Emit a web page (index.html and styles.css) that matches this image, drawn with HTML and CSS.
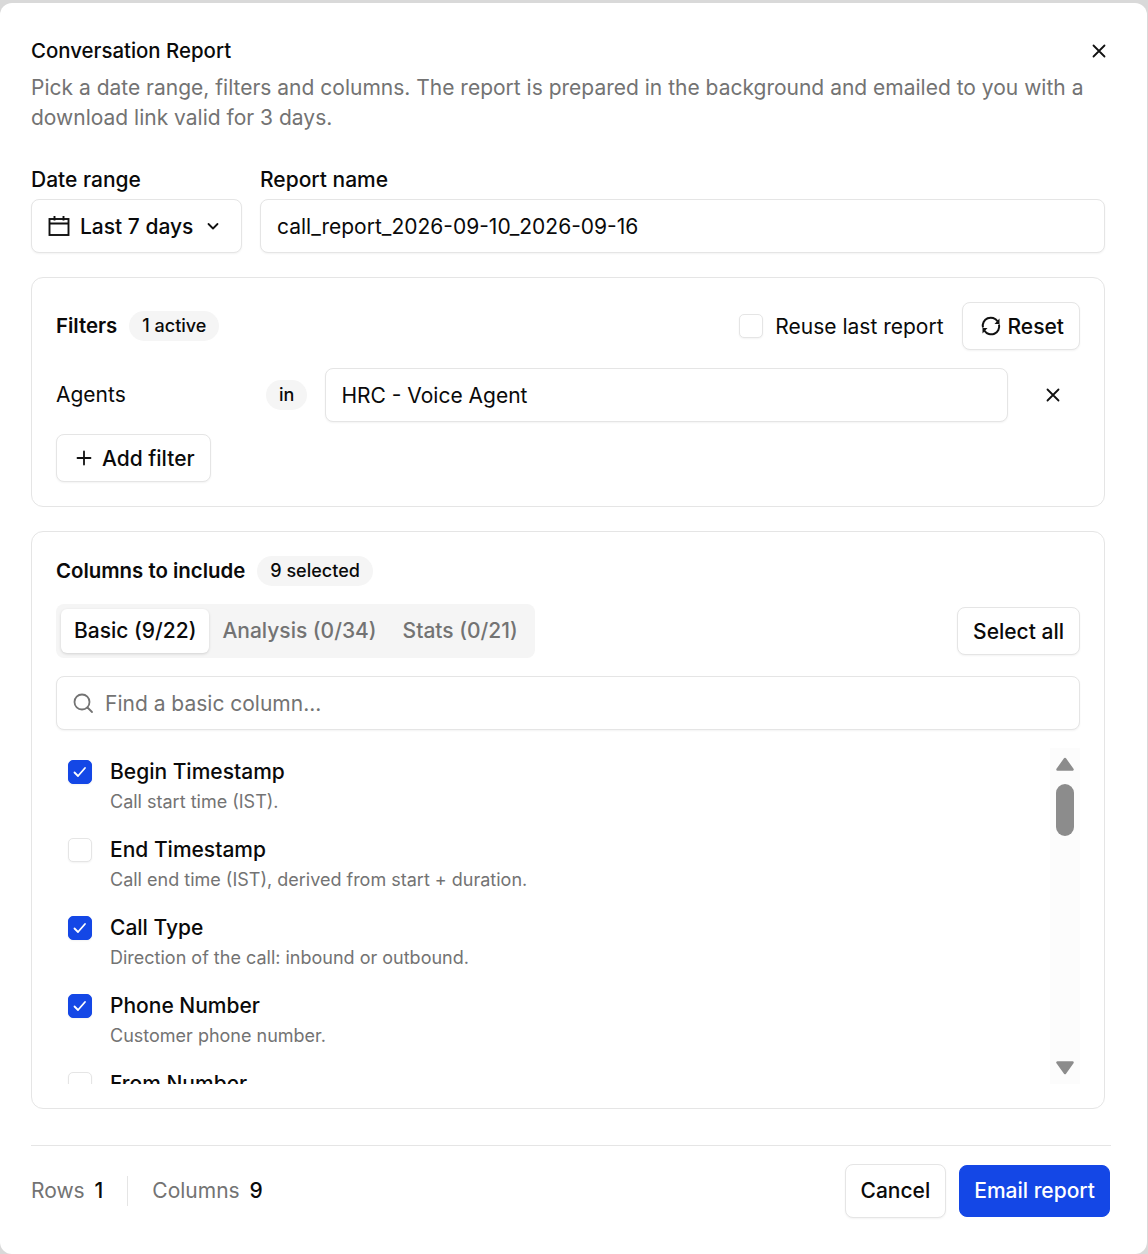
FILE: index.html
```html
<!DOCTYPE html>
<html lang="en">
<head>
    <meta charset="UTF-8">
    <title>Conversation Report</title>
    <link rel="stylesheet" href="styles.css">
</head>
<body>
    <div class="modal">
        <div class="modal-head">
            <h1 class="modal-title">Conversation Report</h1>
            <svg class="close-icon" width="20" height="20" viewBox="0 0 20 20" fill="none" stroke="#111" stroke-width="1.8" stroke-linecap="round"><path d="M4.5 4.5l11 11M15.500 4.500l-11 11"/></svg>
        </div>
        <p class="modal-desc">Pick a date range, filters and columns. The report is prepared in the background and emailed to you with a download link valid for 3 days.</p>

        <div class="modal-body">
            <div class="top-row">
                <div class="field date-field">
                    <label class="field-label">Date range</label>
                    <div class="control date-select">
                        <svg width="22" height="22" viewBox="0 0 22 22" fill="none" stroke="#111" stroke-width="1.900"><rect x="1.500" y="4" width="19" height="16"/><path d="M1.500 8.500h19M6.500 1v4.500M15.500 1v4.500"/></svg>
                        <span>Last 7 days</span>
                        <svg class="chevron" width="16" height="16" viewBox="0 0 16 16" fill="none" stroke="#111" stroke-width="1.800" stroke-linecap="round" stroke-linejoin="round"><path d="M3.500 6l4.500 4.500L12.500 6"/></svg>
                    </div>
                </div>
                <div class="field name-field">
                    <label class="field-label">Report name</label>
                    <div class="control">call_report_2026-09-10_2026-09-16</div>
                </div>
            </div>

            <section class="panel filters-panel">
                <div class="panel-head">
                    <span class="panel-title">Filters</span>
                    <span class="pill">1 active</span>
                    <div class="panel-actions">
                        <span class="checkbox"></span>
                        <span class="reuse-label">Reuse last report</span>
                        <button class="btn reset-btn">
                            <svg width="22" height="22" viewBox="0 0 22 22" fill="none" stroke="#111" stroke-width="2"><path d="M3 12.500A8 8 0 0 1 17.500 6.300M19 9.500A8 8 0 0 1 4.500 15.700"/><path d="M19.500 3.500v5.500h-5z" fill="#111" stroke="none"/><path d="M2.500 18.500V13h5z" fill="#111" stroke="none"/></svg>
                            Reset
                        </button>
                    </div>
                </div>
                <div class="filter-row">
                    <span class="filter-name">Agents</span>
                    <span class="pill op-pill">in</span>
                    <div class="control filter-value">HRC - Voice Agent</div>
                    <svg class="filter-remove" width="20" height="20" viewBox="0 0 20 20" fill="none" stroke="#111" stroke-width="1.800" stroke-linecap="round"><path d="M4.500 4.500l11 11M15.500 4.500l-11 11"/></svg>
                </div>
                <button class="btn add-btn">
                    <svg width="20" height="20" viewBox="0 0 20 20" fill="none" stroke="#111" stroke-width="1.800" stroke-linecap="round"><path d="M10 3.500v13M3.500 10h13"/></svg>
                    Add filter
                </button>
            </section>

            <section class="panel columns-panel">
                <div class="panel-head columns-head">
                    <span class="panel-title">Columns to include</span>
                    <span class="pill">9 selected</span>
                </div>
                <div class="tabs-row">
                    <div class="tabs">
                        <span class="tab active">Basic (9/22)</span>
                        <span class="tab">Analysis (0/34)</span>
                        <span class="tab">Stats (0/21)</span>
                    </div>
                    <button class="btn select-all">Select all</button>
                </div>
                <div class="control search">
                    <svg width="22" height="22" viewBox="0 0 22 22" fill="none" stroke="#737373" stroke-width="1.800" stroke-linecap="round"><circle cx="9" cy="10" r="7.500"/><path d="M14.500 15.500l4.500 4.500"/></svg>
                    <span>Find a basic column...</span>
                </div>
                <div class="list-wrap">
                    <div class="column-list">
                        <div class="column-item">
                            <span class="checkbox checked"><svg width="16" height="16" viewBox="0 0 16 16" fill="none" stroke="#fff" stroke-width="1.800" stroke-linecap="round" stroke-linejoin="round"><path d="M2.500 8.500l3.500 3.500 7-8"/></svg></span>
                            <div class="column-text">
                                <div class="column-name">Begin Timestamp</div>
                                <div class="column-desc">Call start time (IST).</div>
                            </div>
                        </div>
                        <div class="column-item">
                            <span class="checkbox"></span>
                            <div class="column-text">
                                <div class="column-name">End Timestamp</div>
                                <div class="column-desc">Call end time (IST), derived from start + duration.</div>
                            </div>
                        </div>
                        <div class="column-item">
                            <span class="checkbox checked"><svg width="16" height="16" viewBox="0 0 16 16" fill="none" stroke="#fff" stroke-width="1.800" stroke-linecap="round" stroke-linejoin="round"><path d="M2.500 8.500l3.500 3.500 7-8"/></svg></span>
                            <div class="column-text">
                                <div class="column-name">Call Type</div>
                                <div class="column-desc">Direction of the call: inbound or outbound.</div>
                            </div>
                        </div>
                        <div class="column-item">
                            <span class="checkbox checked"><svg width="16" height="16" viewBox="0 0 16 16" fill="none" stroke="#fff" stroke-width="1.800" stroke-linecap="round" stroke-linejoin="round"><path d="M2.500 8.500l3.500 3.500 7-8"/></svg></span>
                            <div class="column-text">
                                <div class="column-name">Phone Number</div>
                                <div class="column-desc">Customer phone number.</div>
                            </div>
                        </div>
                        <div class="column-item">
                            <span class="checkbox"></span>
                            <div class="column-text">
                                <div class="column-name">From Number</div>
                            </div>
                        </div>
                    </div>
                    <div class="scrollbar">
                        <svg width="18" height="14" viewBox="0 0 18 14"><path d="M9 2L16.500 12.500H1.500z" fill="#8c8c8c" stroke="#8c8c8c" stroke-width="2.500" stroke-linejoin="round"/></svg>
                        <div class="scroll-thumb"></div>
                        <svg class="scroll-down" width="18" height="14" viewBox="0 0 18 14"><path d="M1.500 1.500H16.500L9 12z" fill="#8c8c8c" stroke="#8c8c8c" stroke-width="2.500" stroke-linejoin="round"/></svg>
                    </div>
                </div>
            </section>
        </div>

        <div class="modal-foot">
            <span class="stat">Rows <b>1</b></span>
            <span class="stat-sep"></span>
            <span class="stat">Columns <b>9</b></span>
            <div class="foot-actions">
                <button class="btn cancel-btn">Cancel</button>
                <button class="btn primary-btn">Email report</button>
            </div>
        </div>
    </div>
</body>
</html>
```

FILE: styles.css
```css
* {
    box-sizing: border-box;
}

html, body {
    height: 100%;
}

body {
    margin: 0;
    padding-top: 3px;
    background: #d9d9d9;
    font-family: Inter, "Noto Sans", sans-serif;
    color: #0a0a0a;
    overflow: hidden;
}

.modal {
    width: 1147px;
    height: 1251px;
    padding: 33px 37px 0 31px;
    background: #fff;
    border-radius: 12px;
}

.modal-head {
    display: flex;
    justify-content: space-between;
    align-items: center;
    height: 30px;
}

.modal-title {
    margin: 0;
    font-size: 20.400px;
    font-weight: 500;
    line-height: 30px;
}

.close-icon {
    margin-right: 1px;
}

.modal-desc {
    margin: 7px 0 0;
    font-size: 21px;
    line-height: 30px;
    color: #737373;
}

.modal-body {
    width: 1074px;
}

.top-row {
    display: flex;
    gap: 18px;
    margin-top: 32px;
}

.field-label {
    display: block;
    font-size: 21px;
    font-weight: 500;
    line-height: 30px;
    margin-bottom: 4px;
}

.date-field {
    width: 211px;
}

.name-field {
    flex: 1;
}

.control {
    display: flex;
    align-items: center;
    height: 54px;
    padding: 0 16px;
    font-size: 21px;
    background: #fff;
    border: 1px solid #e5e5e5;
    border-radius: 8px;
    box-shadow: 0 1px 2px rgba(0, 0, 0, 0.05);
}

.date-select {
    gap: 10px;
    font-weight: 500;
}

.chevron {
    margin-left: 2px;
}

.panel {
    margin-top: 24px;
    padding: 24px;
    border: 1px solid #e5e5e5;
    border-radius: 12px;
}

.filters-panel {
    height: 230px;
}

.panel-head {
    display: flex;
    align-items: center;
    gap: 12px;
    height: 48px;
}

.panel-title {
    margin-bottom: 2px;
    font-size: 20.400px;
    font-weight: 600;
}

.pill {
    padding: 0 13px;
    height: 30px;
    line-height: 30px;
    font-size: 18px;
    font-weight: 500;
    background: #f5f5f5;
    border-radius: 15px;
}

.panel-actions {
    display: flex;
    align-items: center;
    margin-left: auto;
}

.checkbox {
    display: flex;
    align-items: center;
    justify-content: center;
    flex: none;
    width: 24px;
    height: 24px;
    background: #fff;
    border: 1px solid #e5e5e5;
    border-radius: 5px;
    box-shadow: 0 1px 2px rgba(0, 0, 0, 0.05);
}

.checkbox.checked {
    background: #1447e6;
    border-color: #1447e6;
}

.reuse-label {
    margin: 0 18px 0 12px;
    font-size: 21px;
}

.btn {
    display: inline-flex;
    align-items: center;
    justify-content: center;
    height: 48px;
    padding: 0 15px;
    font-family: inherit;
    font-size: 21px;
    font-weight: 500;
    color: #0a0a0a;
    background: #fff;
    border: 1px solid #e5e5e5;
    border-radius: 8px;
    box-shadow: 0 1px 2px rgba(0, 0, 0, 0.05);
}

.reset-btn {
    gap: 6px;
    padding-left: 17px;
}

.filter-row {
    display: flex;
    align-items: center;
    margin-top: 18px;
}

.filter-name {
    width: 210px;
    margin-bottom: 2px;
    font-size: 21px;
}

.op-pill {
    margin-right: 18px;
}

.filter-value {
    width: 683px;
    padding-left: 15px;
}

.filter-remove {
    margin-left: 35px;
}

.add-btn {
    gap: 8px;
    margin-top: 12px;
    padding: 0 15px 0 17px;
}

.columns-panel {
    height: 578px;
    padding-bottom: 0;
}

.columns-head {
    height: 30px;
}

.tabs-row {
    display: flex;
    justify-content: space-between;
    align-items: center;
    margin-top: 18px;
}

.tabs {
    display: flex;
    align-items: center;
    height: 54px;
    padding: 0 4px 0 5px;
    background: #f5f5f5;
    border-radius: 8px;
}

.tab {
    padding: 0 13px;
    height: 44px;
    line-height: 44px;
    font-size: 21px;
    font-weight: 500;
    color: #737373;
    border-radius: 6px;
}

.tab.active {
    color: #0a0a0a;
    background: #fff;
    box-shadow: 0 1px 3px rgba(0, 0, 0, 0.15);
}

.search {
    gap: 10px;
    margin-top: 18px;
    color: #737373;
}

.list-wrap {
    display: flex;
    justify-content: space-between;
    height: 336px;
    margin-top: 18px;
}

.column-list {
    flex: 1;
    padding: 4px 12px 0;
    overflow: hidden;
}

.column-item {
    display: flex;
    gap: 18px;
    height: 78px;
}

.column-item .checkbox {
    margin-top: 8px;
}

.column-name {
    font-size: 21px;
    font-weight: 500;
    line-height: 30px;
    margin-top: 5px;
}

.column-desc {
    font-size: 18px;
    line-height: 30px;
    color: #737373;
}

.scrollbar {
    display: flex;
    flex-direction: column;
    align-items: center;
    width: 30px;
    padding-top: 9px;
    background: #fcfcfc;
}

.scroll-thumb {
    width: 18px;
    height: 52px;
    margin-top: 13px;
    background: #8c8c8c;
    border-radius: 9px;
}

.scroll-down {
    margin-top: auto;
    margin-bottom: 9px;
}

.modal-foot {
    display: flex;
    align-items: center;
    width: 1080px;
    height: 91px;
    margin-top: 36px;
    border-top: 1px solid #e5e5e5;
}

.stat {
    margin-bottom: 2px;
    font-size: 21px;
    color: #737373;
}

.stat b {
    margin-left: 4px;
    font-weight: 500;
    color: #0a0a0a;
}

.stat-sep {
    width: 1px;
    height: 30px;
    margin: 0 24px;
    background: #e5e5e5;
}

.foot-actions {
    display: flex;
    align-items: center;
    gap: 13px;
    margin-left: auto;
    margin-right: 1px;
}

.foot-actions .btn {
    height: 54px;
    padding-bottom: 2px;
}

.foot-actions .primary-btn {
    height: 52px;
    padding: 0 14px 2px;
    color: #fff;
    background: #1447e6;
    border-color: #1447e6;
    box-shadow: none;
}
```
